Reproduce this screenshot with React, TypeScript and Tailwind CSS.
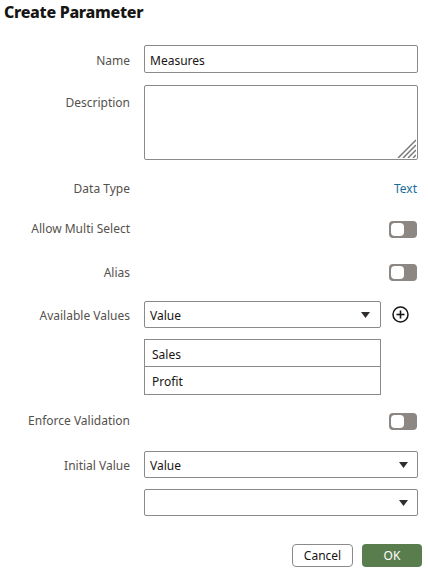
import React from "react";

function Toggle() {
  return (
    <div className="w-[28px] h-[17px] rounded-[4px] bg-[#8c8782] relative">
      <div className="absolute left-[2px] top-[2px] w-[13px] h-[13px] rounded-[4px] bg-white"></div>
    </div>
  );
}

function Caret() {
  return (
    <svg width="9" height="6" viewBox="0 0 9 6">
      <path d="M0 0 L9 0 L4.5 6 Z" fill="#312d2a" />
    </svg>
  );
}

function Label({ children, pad = "pt-[3px]" }: { children: React.ReactNode; pad?: string }) {
  return (
    <div className={"w-[130px] shrink-0 text-right text-[12px] text-[#55514d] " + pad}>
      {children}
    </div>
  );
}

export default function App() {
  return (
    <div
      className="w-[428px] h-[575px] bg-white relative"
      style={{ fontFamily: '"Noto Sans", sans-serif' }}
    >
      <div className="pl-[4px] pt-[1px] text-[16px] font-extrabold text-[#161513] leading-[22px] tracking-[-0.3px]">
        Create Parameter
      </div>

      {/* Name */}
      <div className="flex items-center gap-[14px] mt-[22px] pr-[10px]">
        <Label>Name</Label>
        <div className="flex-1 h-[28px] border border-[#8a8a8a] rounded-[2px] flex items-center px-[5px] pt-[3px] text-[12px] text-[#161513]">
          Measures
        </div>
      </div>

      {/* Description */}
      <div className="flex items-start gap-[14px] mt-[12px] pr-[10px]">
        <Label pad="pt-[9px]">Description</Label>
        <div className="flex-1 h-[75px] border border-[#8a8a8a] rounded-[2px] relative">
          <svg className="absolute right-[1px] bottom-[1px]" width="20" height="20" viewBox="0 0 20 20">
            <g stroke="#777" strokeWidth="1.5">
              <line x1="2" y1="20" x2="20" y2="2" />
              <line x1="7" y1="20" x2="20" y2="7" />
              <line x1="12" y1="20" x2="20" y2="12" />
              <line x1="17" y1="20" x2="20" y2="17" />
            </g>
          </svg>
        </div>
      </div>

      {/* Data Type */}
      <div className="flex items-center gap-[14px] mt-[17px] h-[24px] pr-[11px]">
        <Label pad="">Data Type</Label>
        <div className="flex-1 text-right text-[12px] text-[#166c99]">Text</div>
      </div>

      {/* Allow Multi Select */}
      <div className="flex items-center gap-[14px] mt-[16px] h-[24px] pr-[11px]">
        <Label pad="">Allow Multi Select</Label>
        <div className="flex-1 flex justify-end">
          <Toggle />
        </div>
      </div>

      {/* Alias */}
      <div className="flex items-center gap-[14px] mt-[19px] h-[24px] pr-[11px]">
        <Label pad="pt-[2px]">Alias</Label>
        <div className="flex-1 flex justify-end">
          <Toggle />
        </div>
      </div>

      {/* Available Values */}
      <div className="flex items-center gap-[14px] mt-[17px] pr-[10px]">
        <Label>Available Values</Label>
        <div className="flex-1 flex items-center">
          <div className="w-[237px] h-[27px] border border-[#8a8a8a] rounded-[2px] flex items-center justify-between pl-[5px] pr-[10px] text-[12px] text-[#161513]">
            <span className="pt-[3px]">Value</span>
            <Caret />
          </div>
          <div className="flex-1 flex justify-center pl-[1px]">
            <svg width="17" height="17" viewBox="0 0 17 17">
              <circle cx="8.5" cy="8.5" r="7.5" fill="none" stroke="#161513" strokeWidth="1.5" />
              <line x1="8.5" y1="4.5" x2="8.5" y2="12.5" stroke="#161513" strokeWidth="1.6" />
              <line x1="4.5" y1="8.5" x2="12.5" y2="8.5" stroke="#161513" strokeWidth="1.6" />
            </svg>
          </div>
        </div>
      </div>

      {/* List */}
      <div className="flex gap-[14px] mt-[11px]">
        <div className="w-[130px] shrink-0"></div>
        <div className="w-[237px] border border-[#8a8a8a] text-[12px] text-[#161513]">
          <div className="h-[27px] flex items-center px-[7px] pt-[3px] border-b border-[#8a8a8a]">Sales</div>
          <div className="h-[27px] flex items-center px-[7px] pt-[3px]">Profit</div>
        </div>
      </div>

      {/* Enforce Validation */}
      <div className="flex items-center gap-[14px] mt-[14px] h-[24px] pr-[11px]">
        <Label pad="">Enforce Validation</Label>
        <div className="flex-1 flex justify-end">
          <Toggle />
        </div>
      </div>

      {/* Initial Value */}
      <div className="flex items-center gap-[14px] mt-[18px] pr-[10px]">
        <Label>Initial Value</Label>
        <div className="flex-1 h-[27px] border border-[#8a8a8a] rounded-[2px] flex items-center justify-between pl-[5px] pr-[9px] text-[12px] text-[#161513]">
          <span className="pt-[3px]">Value</span>
          <Caret />
        </div>
      </div>

      <div className="flex items-center gap-[14px] mt-[11px] pr-[10px]">
        <div className="w-[130px] shrink-0"></div>
        <div className="flex-1 h-[27px] border border-[#8a8a8a] rounded-[2px] flex items-center justify-end pl-[5px] pr-[9px]">
          <Caret />
        </div>
      </div>

      {/* Buttons */}
      <div className="flex justify-end gap-[9px] mt-[28px] pr-[6px]">
        <button className="w-[61px] h-[23px] border border-[#8a8a8a] rounded-[4px] bg-white text-[12px] text-[#161513] pt-[1px]">
          Cancel
        </button>
        <button className="w-[60px] h-[23px] rounded-[4px] bg-[#5a7d4e] text-[12px] text-white pt-[1px]">
          OK
        </button>
      </div>
    </div>
  );
}
